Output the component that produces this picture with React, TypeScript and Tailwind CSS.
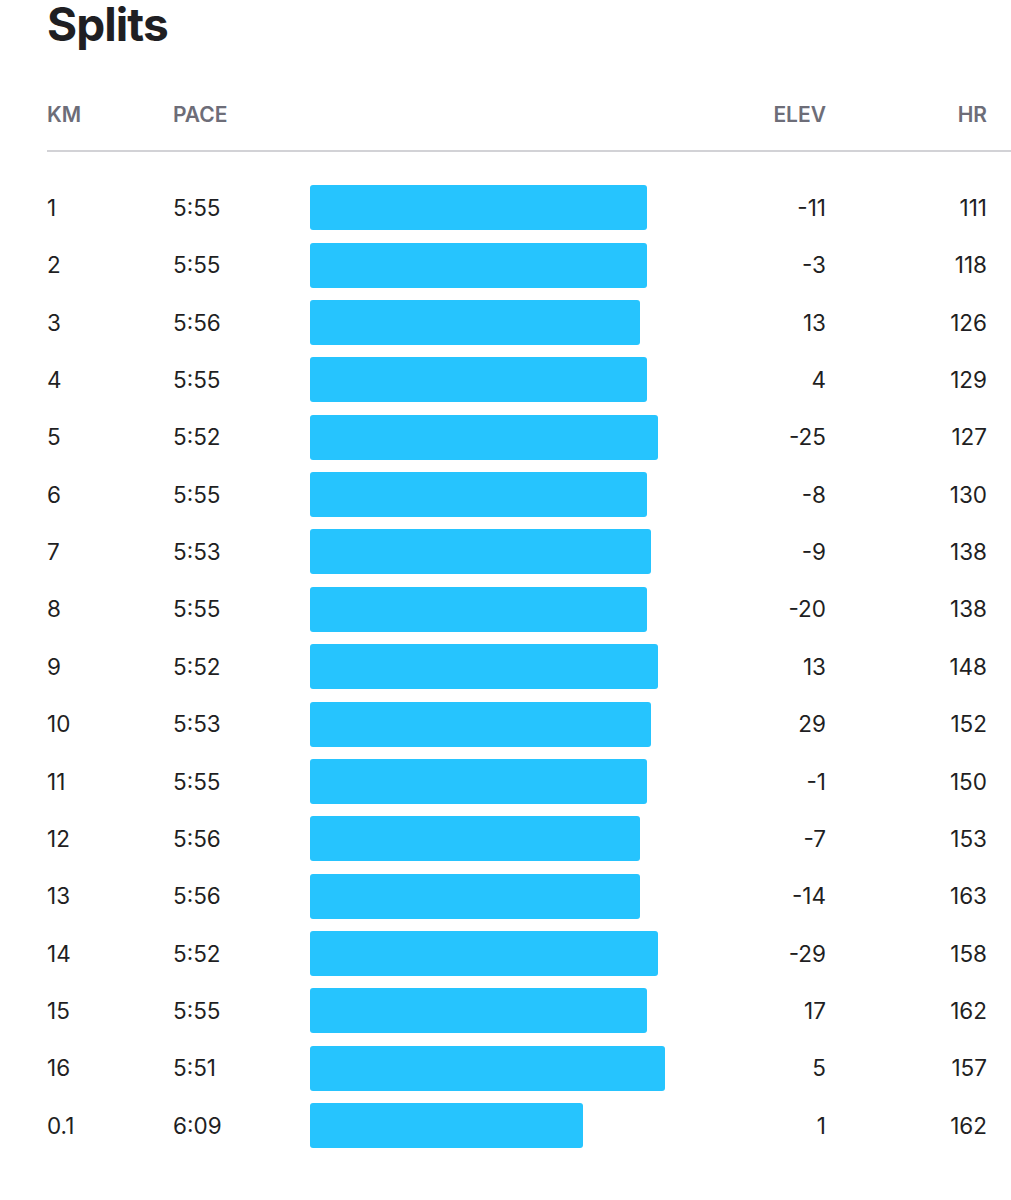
import React from "react";

const rows: [string, string, number, string, string][] = [
  ["1", "5:55", 337, "-11", "111"],
  ["2", "5:55", 337, "-3", "118"],
  ["3", "5:56", 330, "13", "126"],
  ["4", "5:55", 337, "4", "129"],
  ["5", "5:52", 348, "-25", "127"],
  ["6", "5:55", 337, "-8", "130"],
  ["7", "5:53", 341, "-9", "138"],
  ["8", "5:55", 337, "-20", "138"],
  ["9", "5:52", 348, "13", "148"],
  ["10", "5:53", 341, "29", "152"],
  ["11", "5:55", 337, "-1", "150"],
  ["12", "5:56", 330, "-7", "153"],
  ["13", "5:56", 330, "-14", "163"],
  ["14", "5:52", 348, "-29", "158"],
  ["15", "5:55", 337, "17", "162"],
  ["16", "5:51", 355, "5", "157"],
  ["0.1", "6:09", 273, "1", "162"],
];

export default function App() {
  return (
    <div className="w-[1011px] h-[1200px] bg-white pl-[47px] pt-[1px] font-['Inter',sans-serif] text-[#1f1f23] overflow-hidden">
      <h1 className="text-[46px] leading-[46px] h-[46px] font-bold tracking-[-0.02em] text-[#1f1f23]">Splits</h1>
      <div className="mt-[33px] h-[70px] pr-[24px] grid grid-cols-[126px_137px_1fr_130px_161px] items-center text-[21px] font-semibold text-[#6d6d78]">
        <div>KM</div>
        <div>PACE</div>
        <div></div>
        <div className="text-right">ELEV</div>
        <div className="text-right">HR</div>
      </div>
      <div className="h-[2px] bg-[#d2d2d6]"></div>
      <div className="mt-[27px] pr-[24px]">
        {rows.map(([km, pace, w, elev, hr]) => (
          <div
            key={km}
            className="h-[57.375px] grid grid-cols-[126px_137px_1fr_130px_161px] items-center text-[22.5px]"
          >
            <div>{km}</div>
            <div>{pace}</div>
            <div className="h-[45px] flex items-center">
              <div className="h-[45px] rounded-[3px] bg-[#26c4fe]" style={{ width: w }}></div>
            </div>
            <div className="text-right">{elev}</div>
            <div className="text-right">{hr}</div>
          </div>
        ))}
      </div>
    </div>
  );
}
